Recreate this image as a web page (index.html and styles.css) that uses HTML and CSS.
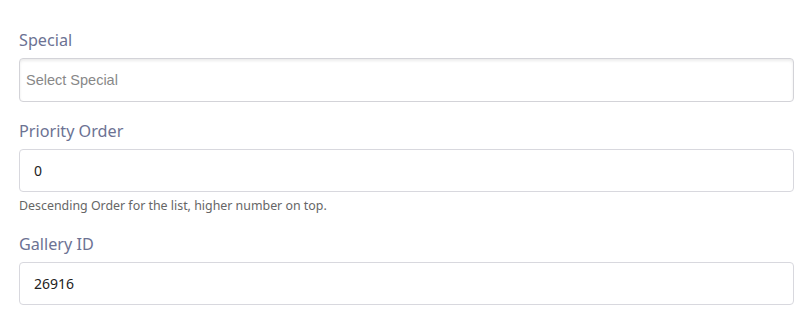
FILE: index.html
```html
<!DOCTYPE html>
<html>
<head>
<meta charset="utf-8">
<link rel="stylesheet" href="styles.css">
</head>
<body>
<div class="form">
  <div class="group">
    <label class="label">Special</label>
    <div class="select"><span class="placeholder">Select Special</span></div>
  </div>
  <div class="group">
    <label class="label">Priority Order</label>
    <div class="input">0</div>
    <div class="help">Descending Order for the list, higher number on top.</div>
  </div>
  <div class="group">
    <label class="label">Gallery ID</label>
    <div class="input">26916</div>
  </div>
</div>
</body>
</html>
```
FILE: styles.css
```css
html, body {
  margin: 0;
  padding: 0;
  background: #fff;
}
.form {
  padding: 28px 12px 0 19px;
  font-family: "Noto Sans", "Open Sans", sans-serif;
}
.group {
  margin-bottom: 17px;
}
.label {
  display: block;
  font-size: 16.2px;
  line-height: 24px;
  color: #6c7293;
  margin-bottom: 6px;
}
.select {
  box-sizing: border-box;
  height: 44px;
  border: 1px solid #d3d3d8;
  border-radius: 4px;
  box-shadow: inset 0 2px 3px rgba(0,0,0,0.08);
  display: flex;
  align-items: center;
  padding-left: 6px;
}
.placeholder {
  font-family: "Liberation Sans", Arial, sans-serif;
  font-size: 14.5px;
  color: #888;
}
.input {
  box-sizing: border-box;
  height: 43px;
  border: 1px solid #d8d8de;
  border-radius: 4px;
  display: flex;
  align-items: center;
  padding-left: 14px;
  font-size: 14px;
  color: #222;
}
.help {
  font-size: 12.4px;
  color: #666;
  margin-top: 5px;
  line-height: 18px;
}
```
